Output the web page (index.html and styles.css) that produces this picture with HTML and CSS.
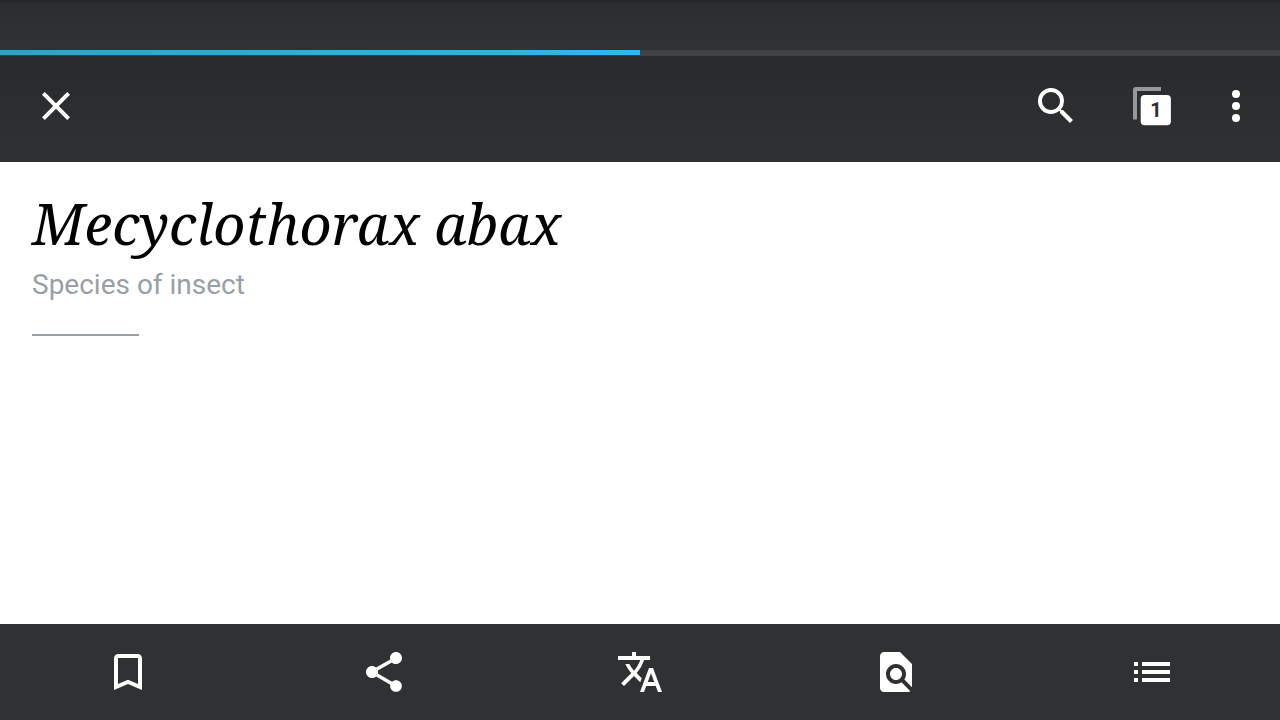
FILE: index.html
```html
<!DOCTYPE html>
<html lang="en">
<head>
<meta charset="utf-8">
<meta name="viewport" content="width=device-width, initial-scale=1">
<title>Mecyclothorax abax</title>
<link rel="stylesheet" href="styles.css">
</head>
<body>
<div class="app">
  <header class="header">
    <div class="status"></div>
    <progress class="loading" value="50" max="100" aria-label="Page loading"></progress>
    <div class="toolbar">
      <button class="icon-button" type="button" aria-label="Close">
        <svg class="icon" viewBox="0 0 24 24"><path d="M19 6.41L17.59 5 12 10.59 6.41 5 5 6.41 10.59 12 5 17.59 6.41 19 12 13.41 17.59 19 19 17.59 13.41 12z"/></svg>
      </button>
      <div class="actions">
        <button class="icon-button" type="button" aria-label="Search">
          <svg class="icon" viewBox="0 0 24 24"><path d="M15.5 14h-.79l-.28-.27A6.471 6.471 0 0 0 16 9.5 6.5 6.5 0 1 0 9.5 16c1.61 0 3.09-.59 4.23-1.57l.27.28v.79l5 4.99L20.49 19l-4.99-5zm-6 0C7.01 14 5 11.99 5 9.5S7.01 5 9.5 5 14 7.01 14 9.5 11.99 14 9.5 14z"/></svg>
        </button>
        <button class="icon-button tabs" type="button" aria-label="Show tabs">
          <svg class="icon" viewBox="0 0 48 48"><path class="tab-back" d="M33 5H8a3 3 0 0 0-3 3v29.500h4V9H33z"/><rect x="12.700" y="13" width="30.200" height="30.200" rx="4"/></svg>
          <span class="tab-count">1</span>
        </button>
        <button class="icon-button" type="button" aria-label="More options">
          <svg class="icon" viewBox="0 0 24 24"><circle cx="12" cy="6" r="2"/><circle cx="12" cy="12" r="2"/><circle cx="12" cy="18" r="2"/></svg>
        </button>
      </div>
    </div>
  </header>
  <main class="article">
    <h1 class="title">Mecyclothorax abax</h1>
    <p class="subtitle">Species of insect</p>
    <hr class="divider">
  </main>
  <nav class="bottom-bar" aria-label="Article tools">
    <button class="nav-button" type="button" aria-label="Save">
      <svg class="icon" viewBox="0 0 24 24"><path d="M17 3H7c-1.100 0-2 .9-2 2v16l7-3 7 3V5c0-1.100-.9-2-2-2zm0 15l-5-2.180L7 18V5h10v13z"/></svg>
    </button>
    <button class="nav-button" type="button" aria-label="Share">
      <svg class="icon" viewBox="0 0 24 24"><path d="M18 16.080c-.76 0-1.440.3-1.960.77L8.910 12.700c.05-.23.09-.46.09-.7s-.04-.47-.09-.7l7.050-4.110c.54.5 1.250.81 2.040.81 1.660 0 3-1.340 3-3s-1.340-3-3-3-3 1.340-3 3c0 .24.04.47.09.7L8.040 9.810C7.500 9.310 6.790 9 6 9c-1.660 0-3 1.340-3 3s1.340 3 3 3c.79 0 1.500-.31 2.040-.81l7.120 4.160c-.05.21-.08.43-.08.65 0 1.610 1.310 2.920 2.920 2.920s2.920-1.310 2.920-2.920-1.310-2.920-2.920-2.920z"/></svg>
    </button>
    <button class="nav-button" type="button" aria-label="Language">
      <svg class="icon" viewBox="0 0 24 24"><path d="M12.870 15.070l-2.540-2.510.03-.03A17.520 17.520 0 0 0 14.070 6H17V4h-7V2H8v2H1v1.990h11.170C11.500 7.920 10.440 9.750 9 11.350 8.070 10.320 7.300 9.190 6.690 8h-2c.73 1.630 1.730 3.170 2.980 4.560l-5.090 5.020L4 19l5-5 3.110 3.110.76-2.040zM18.500 10h-2L12 22h2l1.120-3h4.750L21 22h2l-4.500-12zm-2.620 7l1.620-4.330L19.120 17h-3.240z"/></svg>
    </button>
    <button class="nav-button" type="button" aria-label="Find in page">
      <svg class="icon" viewBox="0 0 24 24"><path d="M20 19.590V8l-6-6H6c-1.100 0-1.990.9-1.990 2L4 20c0 1.100.89 2 1.990 2H18c.45 0 .85-.15 1.190-.4l-4.430-4.430c-.8.52-1.740.83-2.760.83-2.760 0-5-2.240-5-5s2.240-5 5-5 5 2.240 5 5c0 1.020-.31 1.960-.83 2.750L20 19.590zM9 13c0 1.660 1.340 3 3 3s3-1.340 3-3-1.340-3-3-3-3 1.340-3 3z"/></svg>
    </button>
    <button class="nav-button" type="button" aria-label="Contents">
      <svg class="icon" viewBox="0 0 24 24"><path d="M3 7h2v2H3zM7 7h14v2H7zM3 11h2v2H3zM7 11h14v2H7zM3 15h2v2H3zM7 15h14v2H7z"/></svg>
    </button>
  </nav>
</div>
</body>
</html>
```
FILE: styles.css
```css
* {
  box-sizing: border-box;
}

body {
  margin: 0;
  background: #fff;
  font-family: Roboto, "Liberation Sans", sans-serif;
}

.app {
  display: flex;
  flex-direction: column;
  min-height: 100vh;
}

.header {
  display: flex;
  flex-direction: column;
}

.status {
  height: 50px;
  background: linear-gradient(#242527, #2c2d2f 4px, #313234);
}

.loading {
  display: block;
  width: 100%;
  height: 6px;
  border: 0;
  appearance: none;
  background: #414244;
}

.loading::-webkit-progress-bar {
  background: #414244;
}

.loading::-webkit-progress-value {
  background: linear-gradient(transparent 5px, #34434a 5px), linear-gradient(90deg, #369fc8, #36b4e7);
}

.toolbar {
  display: flex;
  justify-content: space-between;
  padding: 26px 20px 32px 32px;
  background: linear-gradient(#292a2c, #303133);
}

.actions {
  display: flex;
  gap: 48px;
}

.actions .icon-button:last-child {
  margin-left: -12px;
}

.icon-button,
.nav-button {
  display: flex;
  align-items: center;
  justify-content: center;
  padding: 0;
  border: 0;
  background: none;
  color: #fff;
  font: inherit;
}

.icon {
  display: block;
  width: 48px;
  height: 48px;
  fill: currentColor;
}

.tabs {
  position: relative;
}

.tab-back {
  fill: #98989a;
}

.tab-count {
  position: absolute;
  top: 13px;
  left: 13px;
  width: 30px;
  color: #2d2e30;
  font-size: 20px;
  font-weight: 700;
  line-height: 30px;
  text-align: center;
}

.article {
  flex: 1;
  padding: 24px 32px;
}

.title {
  margin: 0;
  color: #000;
  font-family: "Noto Serif", "Droid Serif", "Liberation Serif", serif;
  font-size: 56px;
  font-style: italic;
  font-weight: 400;
  line-height: 74px;
}

.subtitle {
  margin: 6px 0 0;
  color: #999fa8;
  font-size: 28px;
  line-height: 38px;
}

.divider {
  width: 107px;
  height: 2px;
  margin: 30px 0 0;
  border: 0;
  background: #999fa8;
}

.bottom-bar {
  display: grid;
  grid-template-columns: repeat(5, 1fr);
  height: 96px;
  background: #303133;
}
```
